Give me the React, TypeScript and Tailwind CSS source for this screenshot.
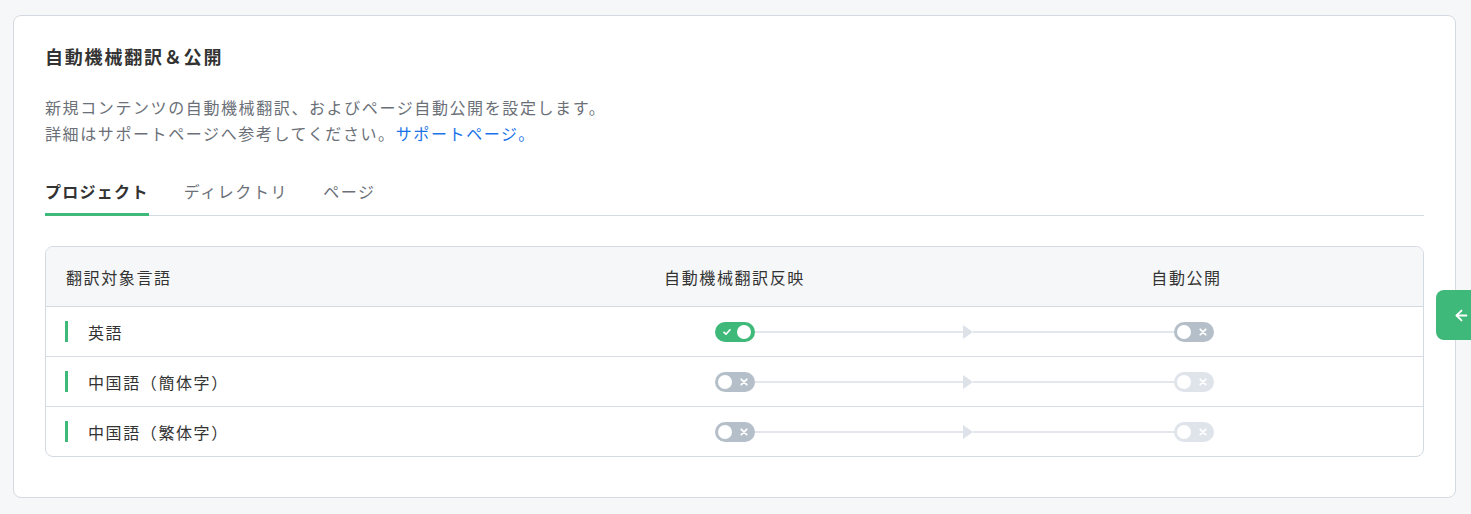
import React from "react";
import { ArrowLeft } from "lucide-react";

type ToggleState = "on" | "off" | "disabled";

function Toggle({ state }: { state: ToggleState }) {
  if (state === "on") {
    return (
      <div className="relative flex h-[20px] w-[40px] shrink-0 items-center justify-end rounded-full bg-[#3fb97a] pr-[4px]">
        <svg className="absolute left-[8px] top-[6px]" width="8" height="8" viewBox="0 0 8 8">
          <path d="M1 4.3 L3 6.2 L7 1.8" fill="none" stroke="white" strokeWidth="1.7" strokeLinecap="round" strokeLinejoin="round" />
        </svg>
        <div className="h-[14px] w-[14px] rounded-full bg-white" />
      </div>
    );
  }
  const bg = state === "off" ? "bg-[#b5bfc9]" : "bg-[#dfe4eb]";
  return (
    <div className={`relative flex h-[20px] w-[40px] shrink-0 items-center rounded-full pl-[3px] ${bg}`}>
      <div className="h-[14px] w-[14px] rounded-full bg-white" />
      <svg className="absolute left-[25px] top-[6px]" width="8" height="8" viewBox="0 0 8 8">
        <path d="M1.3 1.3 L6.7 6.7 M6.7 1.3 L1.3 6.7" fill="none" stroke="white" strokeWidth="1.8" strokeLinecap="round" />
      </svg>
    </div>
  );
}

function Row({ label, a, b, last }: { label: string; a: ToggleState; b: ToggleState; last?: boolean }) {
  return (
    <div className={`grid grid-cols-3 ${last ? "h-[49px]" : "h-[50px] border-b border-[#d8dde4]"}`}>
      <div className="flex items-center pl-[19px]">
        <div className="h-[21px] w-[3px] bg-[#3fb97a]" />
        <span className="ml-[20px] text-[16px] tracking-[0.1em] text-[#333]">{label}</span>
      </div>
      <div className="flex items-center">
        <div className="flex-1" />
        <Toggle state={a} />
        <div className="h-[2px] flex-1 bg-[#e3e7ed]" />
      </div>
      <div className="flex items-center">
        <div className="flex flex-1 items-center">
          <svg width="10" height="14" viewBox="0 0 10 14" className="shrink-0 -ml-px">
            <path d="M0 0 L10 7 L0 14 Z" fill="#dde2e9" />
          </svg>
          <div className="h-[2px] flex-1 bg-[#e3e7ed]" />
        </div>
        <Toggle state={b} />
        <div className="flex-1" />
      </div>
    </div>
  );
}

export default function App() {
  return (
    <div
      className="relative min-h-[514px] bg-[#f6f7f9] pb-[16px] pl-[13px] pr-[15px] pt-[15px]"
      style={{ fontFamily: '"Noto Sans CJK JP", "Noto Sans", sans-serif' }}
    >
      <div className="rounded-[8px] border border-[#d4dae2] bg-white px-[31px] pb-[40px] pt-[27px]">
        <h1 className="text-[18px] font-bold leading-[26px] tracking-[0.1em] text-[#333]">自動機械翻訳＆公開</h1>
        <div className="mt-[25px] text-[16px] leading-[26px] tracking-[0.1em] text-[#6b7078]">
          <p>新規コンテンツの自動機械翻訳、およびページ自動公開を設定します。</p>
          <p>
            詳細はサポートページへ参考してください。
            <span className="text-[#1a73e8]">サポートページ。</span>
          </p>
        </div>

        <div className="mt-[33px] flex gap-[35px] border-b border-[#d4dae2]">
          <div className="-mb-px border-b-[3px] border-[#3fb97a] pb-[10px] text-[16px] font-bold leading-[24px] tracking-[0.08em] text-[#333]">
            プロジェクト
          </div>
          <div className="-mb-px border-b-[3px] border-transparent pb-[10px] text-[16px] leading-[24px] tracking-[0.1em] text-[#6b7078]">
            ディレクトリ
          </div>
          <div className="-mb-px border-b-[3px] border-transparent pb-[10px] text-[16px] leading-[24px] tracking-[0.1em] text-[#6b7078]">
            ページ
          </div>
        </div>

        <div className="mt-[30px] overflow-hidden rounded-[8px] border border-[#d4dae2]">
          <div className="grid h-[60px] grid-cols-3 border-b border-[#d4dae2] bg-[#f6f7f9] text-[16px] tracking-[0.1em] text-[#333]">
            <div className="flex items-center pl-[20px]">翻訳対象言語</div>
            <div className="flex items-center justify-center">自動機械翻訳反映</div>
            <div className="flex items-center justify-center pr-[14px]">自動公開</div>
          </div>
          <Row label="英語" a="on" b="off" />
          <Row label="中国語（簡体字）" a="off" b="disabled" />
          <Row label="中国語（繁体字）" a="off" b="disabled" last />
        </div>
      </div>

      <div className="absolute right-0 top-[290px] flex h-[50px] w-[35px] items-center justify-end rounded-l-[8px] bg-[#3fb97a] pr-[1px]">
        <ArrowLeft size={17} strokeWidth={2.5} color="white" />
      </div>
    </div>
  );
}
